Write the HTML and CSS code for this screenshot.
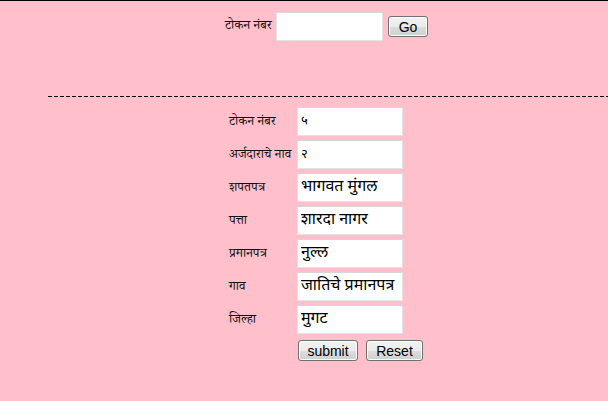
FILE: index.html
```html
<!DOCTYPE html>
<html lang="mr">
<head>
<meta charset="utf-8">
<title>टोकन</title>
<link rel="stylesheet" href="styles.css">
</head>
<body>
<div class="search">
  <span class="search-label">टोकन नंबर</span>
  <input class="field search-field" type="text" value="">
  <button class="btn btn-go" type="button">Go</button>
</div>
<div class="divider"></div>
<form class="details">
  <div class="row"><span class="label">टोकन नंबर</span><input class="field small" type="text" value="५"></div>
  <div class="row"><span class="label">अर्जदाराचे नाव</span><input class="field small" type="text" value="२"></div>
  <div class="row"><span class="label">शपतपत्र</span><input class="field big" type="text" value="भागवत मुंगल"></div>
  <div class="row"><span class="label">पत्ता</span><input class="field big" type="text" value="शारदा नागर"></div>
  <div class="row"><span class="label">प्रमानपत्र</span><input class="field big" type="text" value="नुल्ल"></div>
  <div class="row"><span class="label">गाव</span><input class="field big" type="text" value="जातिचे प्रमानपत्र"></div>
  <div class="row"><span class="label">जिल्हा</span><input class="field big" type="text" value="मुगट"></div>
  <div class="actions">
    <button class="btn btn-submit" type="button">submit</button>
    <button class="btn btn-reset" type="reset">Reset</button>
  </div>
</form>
</body>
</html>
```
FILE: styles.css
```css
html, body {
  margin: 0;
  padding: 0;
}
body {
  background: #ffc0cb;
  border-top: 1px solid #000;
  min-height: 400px;
  font-family: "Noto Serif Devanagari", "Noto Sans Devanagari", "Liberation Serif", serif;
  color: #000;
}
.search {
  display: flex;
  align-items: center;
  margin: 11px 0 0 225px;
  height: 29px;
}
.search-label {
  font-size: 13px;
  width: 47px;
  white-space: nowrap;
  margin-right: 4px;
  color: #111;
}
.field {
  box-sizing: border-box;
  width: 106px;
  height: 29px;
  margin: 0;
  padding: 1px 3px;
  background: #fff;
  border: 1px solid #e3e3e3;
  border-top-color: #d6d6d6;
  font-family: "Noto Sans Devanagari", "Noto Serif Devanagari", "Liberation Sans", sans-serif;
  color: #000;
  outline: none;
}
.search-field {
  width: 107px;
}
.field.small {
  font-size: 13px;
}
.field.big {
  font-size: 16px;
}
.btn {
  box-sizing: border-box;
  height: 21px;
  margin: 0;
  padding: 0 4px;
  font-family: "Liberation Sans", Arial, sans-serif;
  font-size: 14px;
  color: #000;
  border: 1px solid #707070;
  border-radius: 3px;
  background: linear-gradient(#f2f2f2 0%, #ebebeb 50%, #dddddd 51%, #cfcfcf 100%);
  box-shadow: inset 0 0 0 1px #fcfcfc;
}
.btn-go {
  width: 40px;
  margin-left: 5px;
}
.divider {
  height: 1px;
  margin: 55px 0 0 48px;
  background: repeating-linear-gradient(to right, #000 0 4px, transparent 4px 6px);
}
.details {
  display: flex;
  flex-direction: column;
  gap: 4px;
  margin: 10px 0 0 229px;
}
.row {
  display: flex;
  align-items: center;
}
.label {
  width: 68px;
  font-size: 13px;
  white-space: nowrap;
  padding-top: 2px;
  color: #111;
}
.actions {
  display: flex;
  gap: 8px;
  margin: 2px 0 0 69px;
}
.btn-submit {
  width: 60px;
}
.btn-reset {
  width: 57px;
}
```
